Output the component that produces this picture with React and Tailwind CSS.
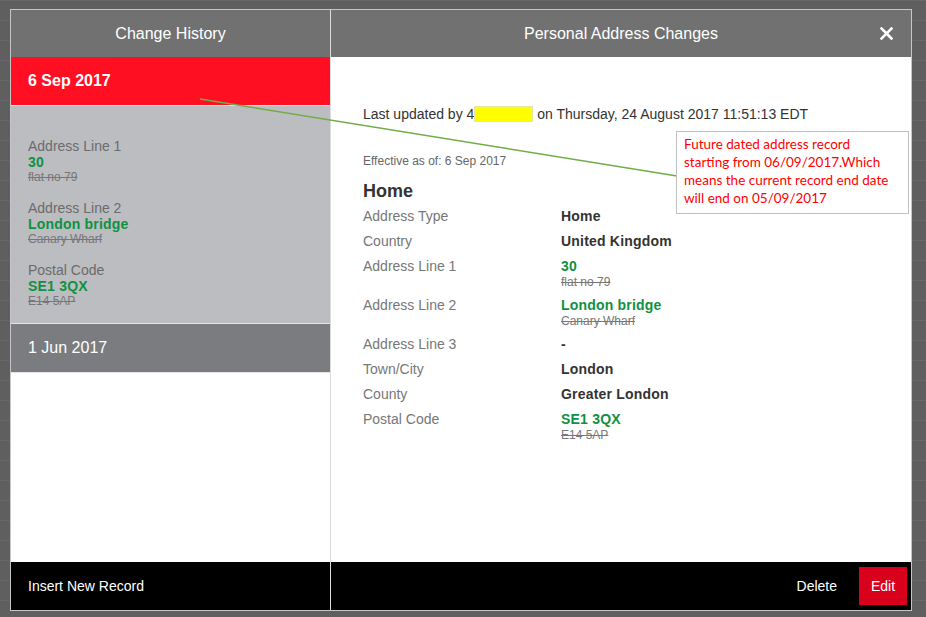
import React from 'react'

const history = [
  { label: 'Address Line 1', value: '30', old: 'flat no 79' },
  { label: 'Address Line 2', value: 'London bridge', old: 'Canary Wharf' },
  { label: 'Postal Code', value: 'SE1 3QX', old: 'E14 5AP' },
]

const details = [
  { label: 'Address Type', value: 'Home' },
  { label: 'Country', value: 'United Kingdom' },
  { label: 'Address Line 1', value: '30', old: 'flat no 79' },
  { label: 'Address Line 2', value: 'London bridge', old: 'Canary Wharf' },
  { label: 'Address Line 3', value: '-' },
  { label: 'Town/City', value: 'London' },
  { label: 'County', value: 'Greater London' },
  { label: 'Postal Code', value: 'SE1 3QX', old: 'E14 5AP' },
]

const App = () => {
  return (
    <div className="relative w-[926px] h-[617px] overflow-hidden bg-[#5f5f5f] bg-[linear-gradient(#676767_1px,transparent_1px)] bg-[size:100%_20px] pl-[10px] pt-[9px] font-['Liberation_Sans',Arial,sans-serif]">
      <div className="flex w-[902px] h-[602px] border border-[#c6c6c6] bg-white">
        {/* left column */}
        <div className="flex flex-col w-[320px] border-r border-[#dcdcdc]">
          <div className="h-[47px] shrink-0 bg-[#717171] flex items-center justify-center text-white text-base">
            Change History
          </div>
          <div className="h-[48px] shrink-0 bg-[#ff0f21] flex items-center pl-[17px] text-white text-base font-bold">
            6 Sep 2017
          </div>
          <div className="h-[218px] shrink-0 border-t border-[#e4e4e4] bg-[#bcbdc1] pl-[17px] pt-[32px] flex flex-col gap-[16px]">
            {history.map((h) => (
              <div key={h.label}>
                <div className="text-sm leading-4 text-[#6b6b6b]">{h.label}</div>
                <div className="text-sm leading-4 font-bold text-[#109142] tracking-[0.2px]">{h.value}</div>
                <div className="text-xs leading-[14px] text-[#777] line-through">{h.old}</div>
              </div>
            ))}
          </div>
          <div className="h-[49px] shrink-0 border-t border-[#e4e4e4] bg-[#7b7c80] flex items-center pl-[17px] text-white text-base">
            1 Jun 2017
          </div>
          <div className="flex-1 border-t border-[#e4e4e4]" />
          <div className="h-[48px] shrink-0 bg-black flex items-center pl-[17px] text-white text-sm">
            Insert New Record
          </div>
        </div>

        {/* right column */}
        <div className="flex flex-col flex-1">
          <div className="relative h-[47px] shrink-0 bg-[#717171] flex items-center justify-center text-white text-base">
            Personal Address Changes
            <svg className="absolute right-[18px] top-[17px]" width="13" height="13" viewBox="0 0 13 13">
              <path d="M1.5 1.5 L11.5 11.5 M11.5 1.5 L1.5 11.5" stroke="white" strokeWidth="2.6" strokeLinecap="square" />
            </svg>
          </div>
          <div className="flex-1 pl-[32px] pt-[47px] text-[#333]">
            <div className="text-sm leading-5 flex items-center">
              <span>Last updated by 4</span>
              <span className="inline-block w-[59px] h-[16px] bg-[#ffff00] border border-[#e6e6a0]" />
              <span>&nbsp;on Thursday, 24 August 2017 11:51:13 EDT</span>
            </div>
            <div className="mt-[29px] text-xs leading-4 text-[#666]">Effective as of: 6 Sep 2017</div>
            <div className="mt-[10px] text-lg leading-6 font-bold text-[#333]">Home</div>
            <div className="mt-[3px]">
              {details.map((d) => (
                <div key={d.label} className={`flex ${d.old ? 'pb-[7px]' : 'pb-[5px]'}`}>
                  <div className="w-[198px] text-sm leading-5 text-[#777]">{d.label}</div>
                  <div>
                    <div className={`text-sm leading-5 font-bold tracking-[0.2px] ${d.old ? 'text-[#109142]' : 'text-[#333]'}`}>
                      {d.value}
                    </div>
                    {d.old && <div className="text-xs leading-3 text-[#777] line-through">{d.old}</div>}
                  </div>
                </div>
              ))}
            </div>
          </div>
          <div className="h-[48px] shrink-0 bg-black flex items-center justify-end gap-[22px] pr-[4px] text-white text-sm">
            <span>Delete</span>
            <span className="h-[38px] w-[48px] bg-[#d9001b] flex items-center justify-center">Edit</span>
          </div>
        </div>
      </div>

      {/* annotation */}
      <svg className="absolute left-0 top-0 pointer-events-none" width="926" height="617">
        <line x1="200" y1="99" x2="677" y2="176" stroke="#70ad47" strokeWidth="1.6" />
      </svg>
      <div className="absolute left-[676px] top-[131px] w-[233px] h-[83px] border border-[#c0c0c0] bg-white px-[7px] pt-[3px] text-[13.5px] leading-[18px] text-[#ff0000] font-['Lato',sans-serif] whitespace-nowrap">
        Future dated address record
        <br />
        starting from 06/09/2017.Which
        <br />
        means the current record end date
        <br />
        will end on 05/09/2017
      </div>
    </div>
  )
}

export default App
